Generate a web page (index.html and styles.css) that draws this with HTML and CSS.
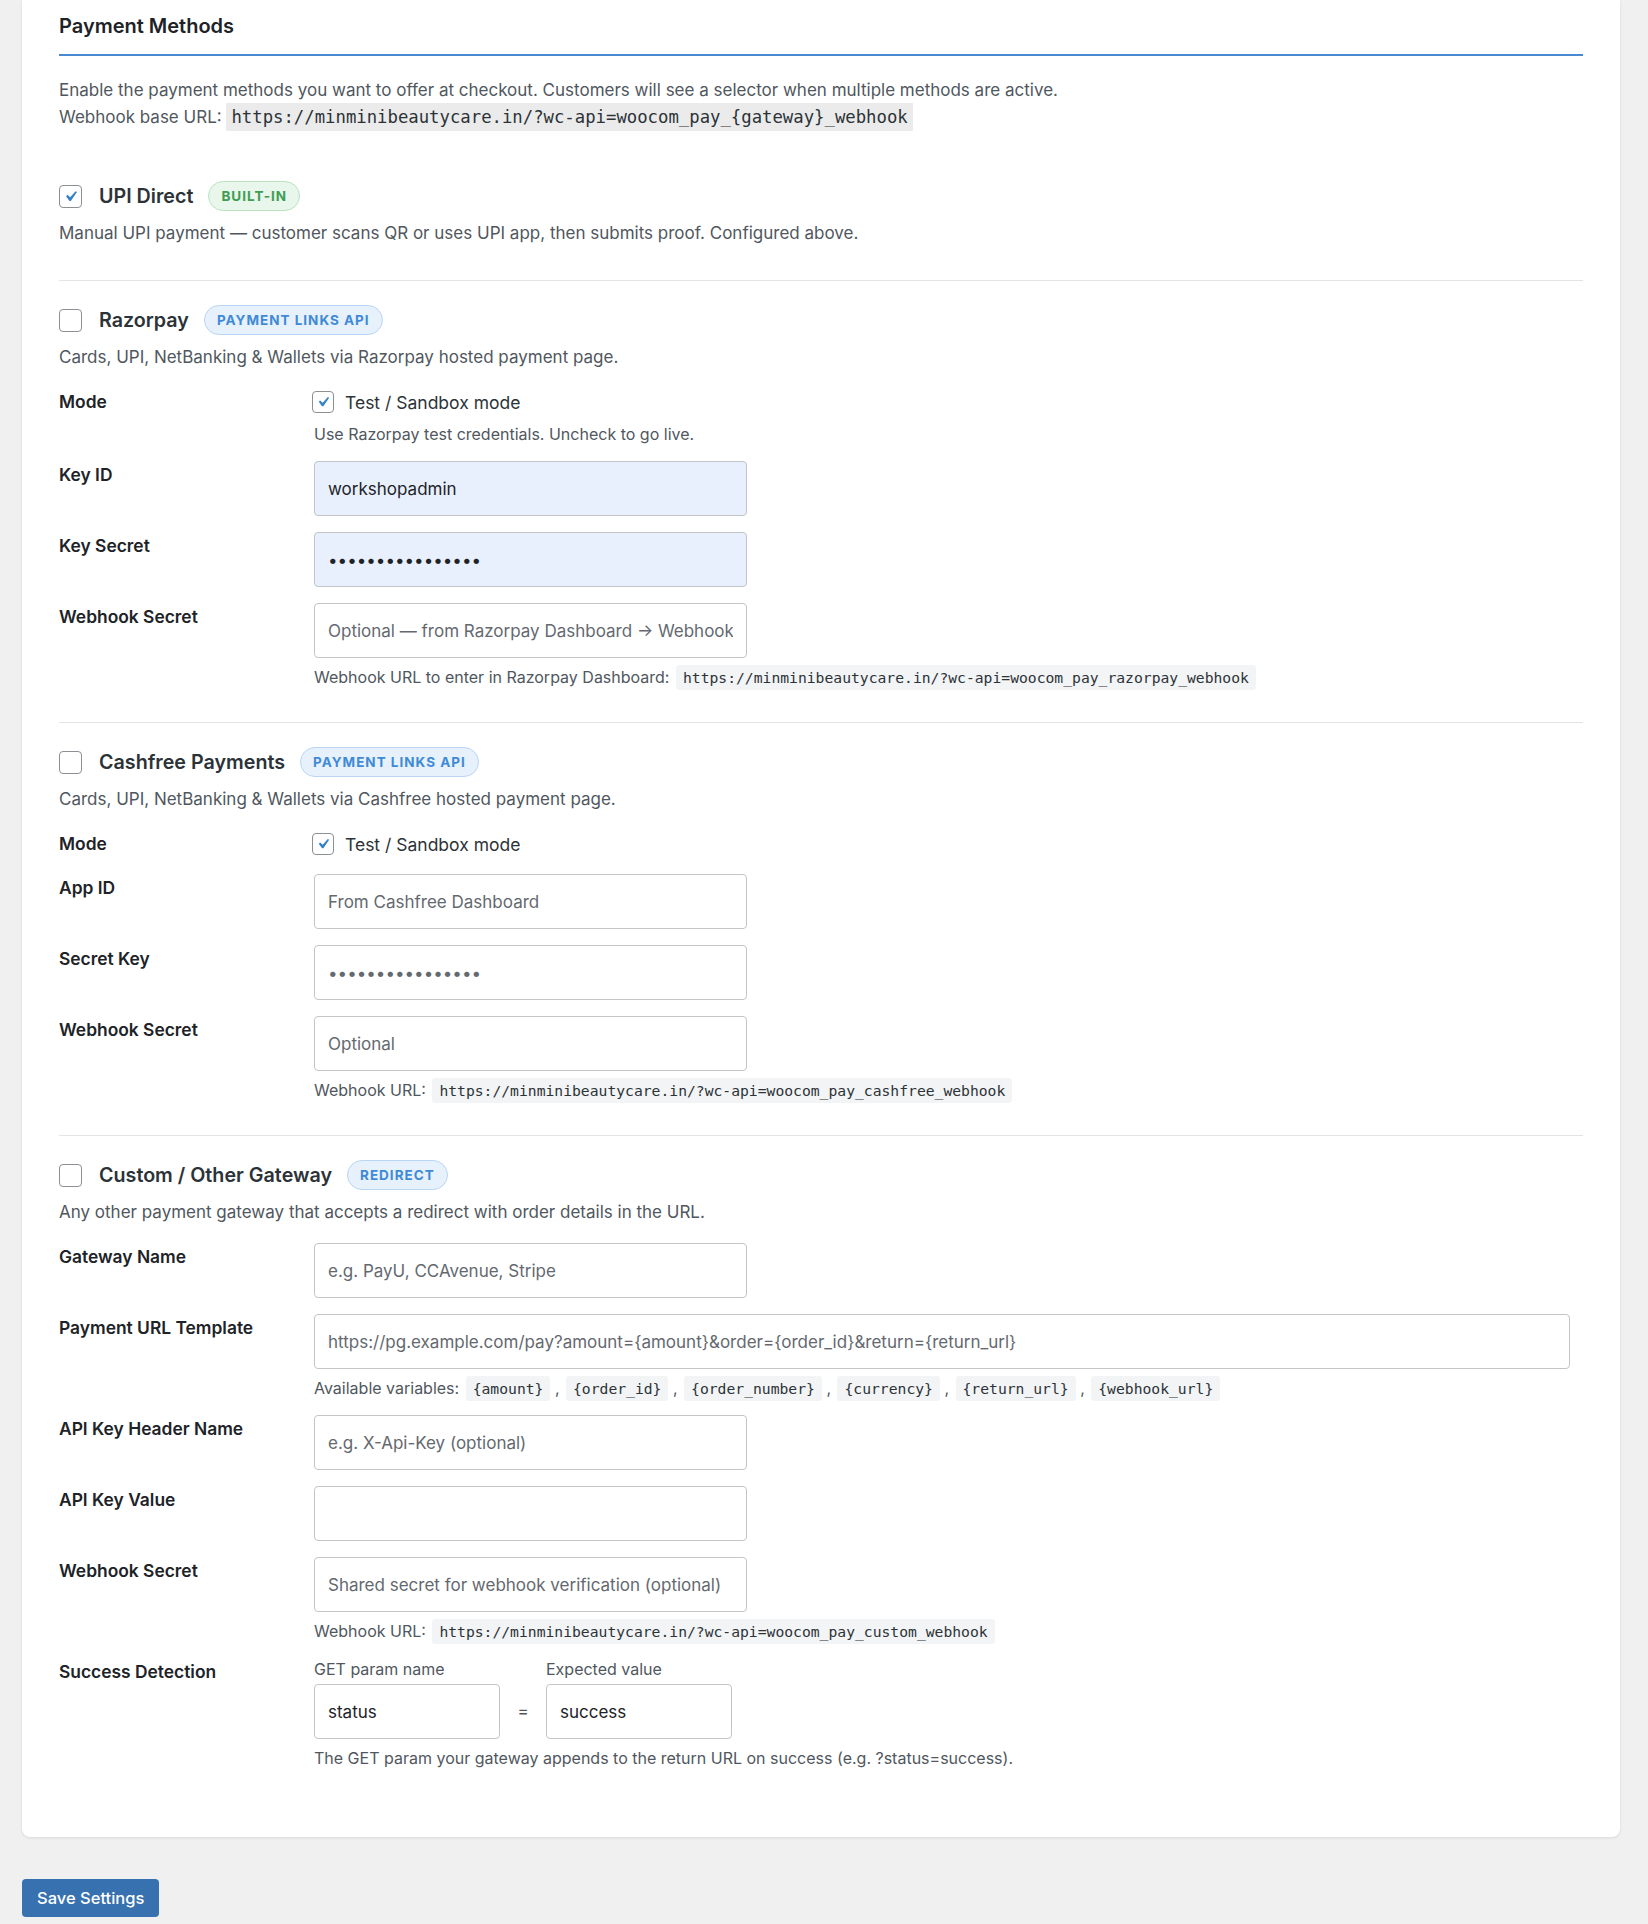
FILE: index.html
```html
<!DOCTYPE html>
<html>
<head>
    <title>Payment Methods</title>
    <link rel="stylesheet" href="styles.css">
</head>
<body>
    <div class="page">
        <div class="card">
            <h2 class="card-title">Payment Methods</h2>
            <p class="intro">
                Enable the payment methods you want to offer at checkout. Customers will see a selector when multiple methods are active.<br>
                Webhook base URL: <code class="code-lg">https://minminibeautycare.in/?wc-api=woocom_pay_{gateway}_webhook</code>
            </p>

            <!-- UPI -->
            <section class="gateway">
                <div class="gateway-head">
                    <span class="check check-lg is-on"><svg viewBox="0 0 20 20"><path d="M14.83 4.89l1.34.94-5.81 8.38H9.02L5.78 9.67l1.34-1.25 2.57 2.4z"/></svg></span>
                    <span class="gateway-name">UPI Direct</span>
                    <span class="badge badge-green">Built-in</span>
                </div>
                <p class="gateway-desc">Manual UPI payment — customer scans QR or uses UPI app, then submits proof. Configured above.</p>
            </section>

            <!-- Razorpay -->
            <section class="gateway">
                <div class="gateway-head">
                    <span class="check check-lg"></span>
                    <span class="gateway-name">Razorpay</span>
                    <span class="badge badge-blue">Payment Links API</span>
                </div>
                <p class="gateway-desc">Cards, UPI, NetBanking &amp; Wallets via Razorpay hosted payment page.</p>
                <div class="fields">
                    <div class="field">
                        <div class="field-label">Mode</div>
                        <div class="field-control">
                            <label class="toggle"><span class="check is-on"><svg viewBox="0 0 20 20"><path d="M14.83 4.89l1.34.94-5.81 8.38H9.02L5.78 9.67l1.34-1.25 2.57 2.4z"/></svg></span>Test / Sandbox mode</label>
                            <p class="help help-tight">Use Razorpay test credentials. Uncheck to go live.</p>
                        </div>
                    </div>
                    <div class="field">
                        <div class="field-label">Key ID</div>
                        <div class="field-control">
                            <input type="text" class="input is-filled" value="workshopadmin">
                        </div>
                    </div>
                    <div class="field">
                        <div class="field-label">Key Secret</div>
                        <div class="field-control">
                            <input type="password" class="input is-filled" value="abcdefghijklmnop">
                        </div>
                    </div>
                    <div class="field">
                        <div class="field-label">Webhook Secret</div>
                        <div class="field-control">
                            <input type="text" class="input" placeholder="Optional — from Razorpay Dashboard → Webhook">
                            <p class="help">Webhook URL to enter in Razorpay Dashboard: <code>https://minminibeautycare.in/?wc-api=woocom_pay_razorpay_webhook</code></p>
                        </div>
                    </div>
                </div>
            </section>

            <!-- Cashfree -->
            <section class="gateway">
                <div class="gateway-head">
                    <span class="check check-lg"></span>
                    <span class="gateway-name">Cashfree Payments</span>
                    <span class="badge badge-blue">Payment Links API</span>
                </div>
                <p class="gateway-desc">Cards, UPI, NetBanking &amp; Wallets via Cashfree hosted payment page.</p>
                <div class="fields">
                    <div class="field">
                        <div class="field-label">Mode</div>
                        <div class="field-control">
                            <label class="toggle"><span class="check is-on"><svg viewBox="0 0 20 20"><path d="M14.83 4.89l1.34.94-5.81 8.38H9.02L5.78 9.67l1.34-1.25 2.57 2.4z"/></svg></span>Test / Sandbox mode</label>
                        </div>
                    </div>
                    <div class="field">
                        <div class="field-label">App ID</div>
                        <div class="field-control">
                            <input type="text" class="input" placeholder="From Cashfree Dashboard">
                        </div>
                    </div>
                    <div class="field">
                        <div class="field-label">Secret Key</div>
                        <div class="field-control">
                            <input type="password" class="input" placeholder="••••••••••••••••">
                        </div>
                    </div>
                    <div class="field">
                        <div class="field-label">Webhook Secret</div>
                        <div class="field-control">
                            <input type="text" class="input" placeholder="Optional">
                            <p class="help">Webhook URL: <code>https://minminibeautycare.in/?wc-api=woocom_pay_cashfree_webhook</code></p>
                        </div>
                    </div>
                </div>
            </section>

            <!-- Custom -->
            <section class="gateway">
                <div class="gateway-head">
                    <span class="check check-lg"></span>
                    <span class="gateway-name">Custom / Other Gateway</span>
                    <span class="badge badge-blue">Redirect</span>
                </div>
                <p class="gateway-desc">Any other payment gateway that accepts a redirect with order details in the URL.</p>
                <div class="fields">
                    <div class="field">
                        <div class="field-label">Gateway Name</div>
                        <div class="field-control">
                            <input type="text" class="input" placeholder="e.g. PayU, CCAvenue, Stripe">
                        </div>
                    </div>
                    <div class="field">
                        <div class="field-label">Payment URL Template</div>
                        <div class="field-control">
                            <input type="text" class="input input-wide" placeholder="https://pg.example.com/pay?amount={amount}&amp;order={order_id}&amp;return={return_url}">
                            <p class="help">Available variables: <code>{amount}</code> , <code>{order_id}</code> , <code>{order_number}</code> , <code>{currency}</code> , <code>{return_url}</code> , <code>{webhook_url}</code></p>
                        </div>
                    </div>
                    <div class="field">
                        <div class="field-label">API Key Header Name</div>
                        <div class="field-control">
                            <input type="text" class="input" placeholder="e.g. X-Api-Key (optional)">
                        </div>
                    </div>
                    <div class="field">
                        <div class="field-label">API Key Value</div>
                        <div class="field-control">
                            <input type="password" class="input">
                        </div>
                    </div>
                    <div class="field">
                        <div class="field-label">Webhook Secret</div>
                        <div class="field-control">
                            <input type="text" class="input" placeholder="Shared secret for webhook verification (optional)">
                            <p class="help">Webhook URL: <code>https://minminibeautycare.in/?wc-api=woocom_pay_custom_webhook</code></p>
                        </div>
                    </div>
                    <div class="field">
                        <div class="field-label">Success Detection</div>
                        <div class="field-control">
                            <div class="pair">
                                <div class="pair-col">
                                    <span class="pair-label">GET param name</span>
                                    <input type="text" class="input input-short" value="status">
                                </div>
                                <span class="pair-eq">=</span>
                                <div class="pair-col">
                                    <span class="pair-label">Expected value</span>
                                    <input type="text" class="input input-short" value="success">
                                </div>
                            </div>
                            <p class="help">The GET param your gateway appends to the return URL on success (e.g. ?status=success).</p>
                        </div>
                    </div>
                </div>
            </section>
        </div>

        <button class="btn-primary">Save Settings</button>
    </div>
</body>
</html>
```

FILE: styles.css
```css
body {
    margin: 0;
    background: #f0f0f1;
    font-family: Inter, "Noto Sans", sans-serif;
    color: #1d2327;
}

.page {
    padding: 0 28px 40px 22px;
}

.card {
    background: #fff;
    border-radius: 0 0 8px 8px;
    box-shadow: 0 1px 3px rgba(0, 0, 0, 0.1);
    padding: 0 37px 34px;
}

.card-title {
    margin: 0;
    padding: 14px 0 15px;
    font-size: 20px;
    line-height: 25px;
    font-weight: 600;
    border-bottom: 2px solid #4a89d1;
}

.intro {
    margin: 21px 0 26px;
    font-size: 17px;
    line-height: 27px;
    color: #50575e;
}

.code-lg {
    font-family: "DejaVu Sans Mono", monospace;
    font-size: 17.3px;
    line-height: 1;
    background: #ebebeb;
    color: #2c3338;
    padding: 4px 5px;
}

.gateway {
    padding: 24px 0 34px;
    border-top: 1px solid #e2e4e7;
}

.gateway:first-of-type {
    border-top: none;
}

.gateway-head {
    display: flex;
    align-items: center;
    height: 30px;
}

.gateway-name {
    font-size: 19.7px;
    font-weight: 600;
    color: #2c3338;
    margin: 0 15px 0 17px;
}

.check {
    box-sizing: border-box;
    display: inline-block;
    width: 22px;
    height: 22px;
    border: 1px solid #8c8f94;
    border-radius: 4px;
    background: #fff;
    flex-shrink: 0;
}

.check-lg {
    width: 23px;
    height: 23px;
}

.check svg {
    display: block;
    width: 100%;
    height: 100%;
    fill: #3582c4;
}

.badge {
    display: inline-block;
    height: 30px;
    line-height: 28px;
    box-sizing: border-box;
    padding: 0 12px;
    border-radius: 15px;
    font-size: 13.5px;
    font-weight: 700;
    letter-spacing: 1px;
    text-transform: uppercase;
}

.badge-green {
    background: #e8f6eb;
    border: 1px solid #b9e2c2;
    color: #3f9d52;
}

.badge-blue {
    background: #e7f1fc;
    border: 1px solid #b8d5f3;
    color: #3f8ad6;
}

.gateway-desc {
    margin: 9px 0 0;
    font-size: 17px;
    line-height: 26px;
    color: #50575e;
}

.fields {
    display: flex;
    flex-direction: column;
    gap: 16px;
    margin-top: 18px;
}

.field {
    display: grid;
    grid-template-columns: 255px 1fr;
}

.field-label {
    font-size: 17.4px;
    font-weight: 600;
    line-height: 26px;
    padding-top: 1px;
}

.toggle {
    display: flex;
    align-items: center;
    gap: 11px;
    height: 28px;
    margin-left: -2px;
    font-size: 17.5px;
    color: #2c3338;
}

.input {
    box-sizing: border-box;
    display: block;
    width: 433px;
    height: 55px;
    padding: 0 13px;
    border: 1px solid #c3c4c7;
    border-radius: 4px;
    background: #fff;
    font-family: Inter, "Noto Sans", sans-serif;
    font-size: 17px;
    color: #1d2327;
}

.input::placeholder {
    color: #646970;
}

.input.is-filled {
    background: #e8f0fe;
}

.input-wide {
    width: 99%;
}

.input-short {
    width: 186px;
}

.help {
    margin: 8px 0 0;
    font-size: 16px;
    line-height: 22px;
    color: #50575e;
}

.help-tight {
    margin-top: 7px;
}

.help code {
    font-family: "DejaVu Sans Mono", monospace;
    font-size: 14.7px;
    line-height: 1;
    background: #f3f4f5;
    color: #2c3338;
    padding: 4px 7px;
    border-radius: 3px;
    margin-left: 2px;
}

.pair {
    display: flex;
    align-items: flex-end;
    gap: 17px;
}

.pair-col {
    display: flex;
    flex-direction: column;
    gap: 4px;
}

.pair-label {
    font-size: 16px;
    line-height: 22px;
    color: #50575e;
}

.pair-eq {
    line-height: 55px;
    font-size: 17px;
    color: #50575e;
    width: 12px;
    text-align: center;
}

.btn-primary {
    margin-top: 42px;
    height: 38px;
    padding: 0 15px;
    border: none;
    border-radius: 4px;
    background: #3871b0;
    color: #fff;
    font-family: Inter, "Noto Sans", sans-serif;
    font-size: 16.5px;
    font-weight: 500;
    cursor: pointer;
}
```
